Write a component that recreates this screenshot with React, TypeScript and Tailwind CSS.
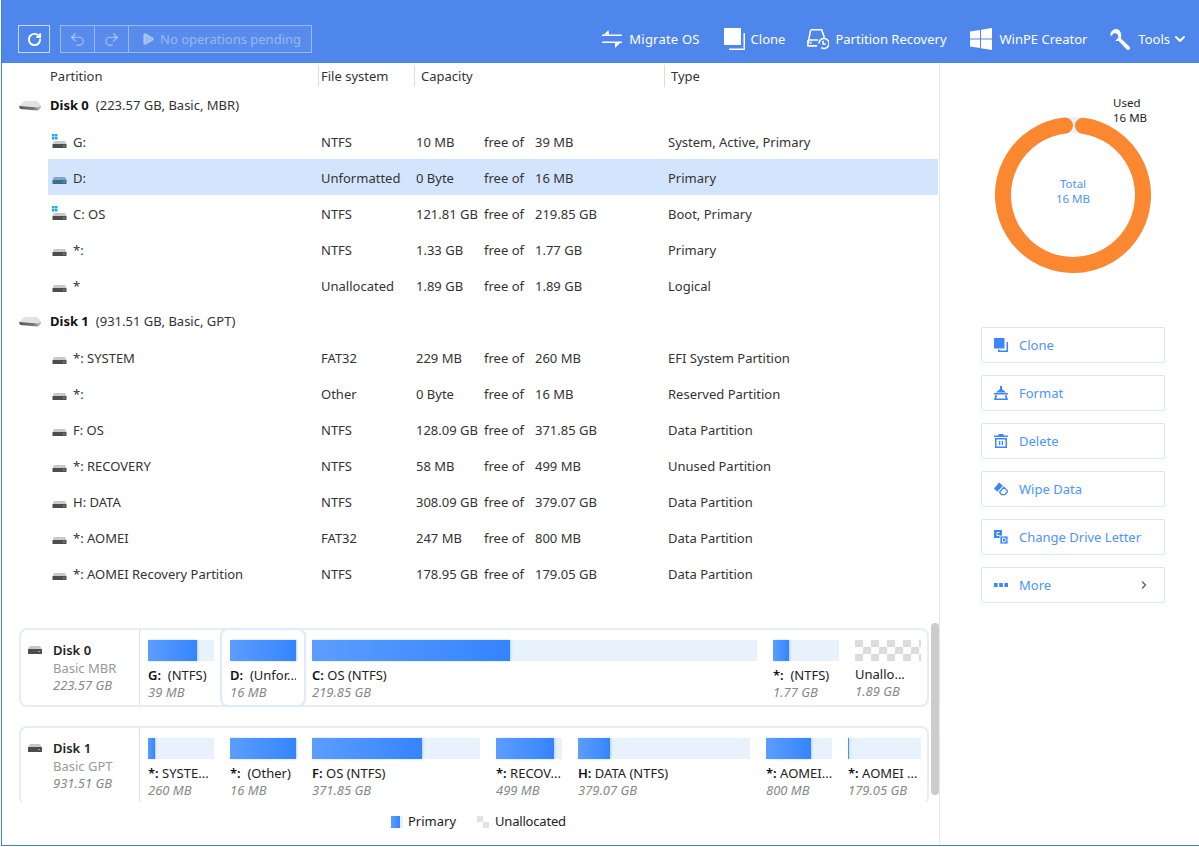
import React from 'react';
import { ChevronDown, ChevronRight, RotateCw, Undo2, Redo2, Play } from 'lucide-react';

// small drive icon, optional windows flag on top-left
const DriveIcon = ({ system, selected }: { system?: boolean; selected?: boolean }) => (
  <svg width="15" height="14" viewBox="0 0 15 14" className="shrink-0">
    {system && (
      <g fill="#19a9e8">
        <rect x="0" y="0" width="2.500" height="2.500" />
        <rect x="3" y="0" width="2.500" height="2.500" />
        <rect x="0" y="3" width="2.500" height="2.500" />
        <rect x="3" y="3" width="2.500" height="2.500" />
      </g>
    )}
    <path d="M2 7h11l1.500 3H.5z" fill={selected ? '#7fa9c9' : '#c9c9c9'} />
    <rect x="0.500" y="10" width="14" height="4" rx="0.500" fill={selected ? '#3f6d8e' : '#4d4d4d'} />
    <rect x="11" y="11.500" width="2" height="1" fill="#3ddc5a" />
  </svg>
);

const DiskIcon = () => (
  <svg width="22" height="11" viewBox="0 0 22 11" className="shrink-0">
    <defs>
      <linearGradient id="diskband" x1="0" y1="0" x2="1" y2="0">
        <stop offset="0" stopColor="#555" />
        <stop offset="0.7" stopColor="#777" />
        <stop offset="1" stopColor="#c4c4c4" />
      </linearGradient>
    </defs>
    <path d="M5 0h13l4 4.500-3 2L0 5z" fill="#e2e2e2" />
    <path d="M0 5l19 1.500 3-2v2L19 9.500 1 8z" fill="url(#diskband)" />
  </svg>
);

const MapDriveIcon = () => (
  <svg width="14" height="8" viewBox="0 0 14 8" className="shrink-0">
    <path d="M2 0h10l2 3H0z" fill="#c8c8c8" />
    <rect x="0" y="3" width="14" height="5" rx="0.500" fill="#4d4d4d" />
    <rect x="10" y="5" width="2" height="1" fill="#3ddc5a" />
  </svg>
);

const NavMigrate = () => (
  <svg width="20" height="20" viewBox="0 0 20 20" fill="#fff">
    <path d="M0 5.500h20v1.600H0zM0 12.500h20v1.600H0z" />
    <path d="M6.500 1L2 5.500h5zM13 14h5l-5 5z" />
  </svg>
);

const NavClone = () => (
  <svg width="22" height="22" viewBox="0 0 22 22" fill="#fff">
    <rect x="0" y="0" width="17" height="17" />
    <path d="M19.500 5H21v17H5v-1.500h14.500z" />
  </svg>
);

const NavRecovery = () => (
  <svg width="22" height="22" viewBox="0 0 24 22" fill="none" stroke="#fff" strokeWidth="1.700">
    <path d="M4 1h12l3 8.500M1 16.500L4 1M1 12h11M1 12v6.500h10" />
    <rect x="3" y="14" width="2" height="2" fill="#fff" stroke="none" />
    <path d="M13 16a5.500 5.500 0 1 1 2.500 4.500M17.500 13v3.500h3" />
  </svg>
);

const NavWindows = () => (
  <svg width="22" height="22" viewBox="0 0 22 22" fill="#fff">
    <path d="M0 3.500l10-1.500v8.500H0zM11 1.800L22 0v10.500H11zM0 11.500h10V20L0 18.500zM11 11.500h11V22l-11-1.800z" />
  </svg>
);

const NavWrench = () => (
  <svg width="21" height="21" viewBox="0 0 21 21" fill="#fff">
    <path d="M6.500 0C3 0 .5 2.500.5 5.500c0 .6.100 1.200.3 1.700L4 4l3.500 1 1 3.500L5.300 11.700c.5.200 1.100.3 1.700.3.500 0 1-.1 1.500-.2l8 8.500c.8.900 2.200.9 3 .1s.8-2.200-.1-3l-8.500-8c.1-.5.2-1 .2-1.500C11.800 4 9.500 0 6.500 0z" />
  </svg>
);

const SideClone = () => (
  <svg width="14" height="14" viewBox="0 0 14 14" fill="#3a86ff">
    <rect width="10.500" height="10.500" />
    <path d="M12 4h2v10H4v-2.500h1.500V12.500h7V4z" />
  </svg>
);
const SideFormat = () => (
  <svg width="14" height="14" viewBox="0 0 14 14" fill="#3a86ff">
    <path d="M6 0h2v3l4 3.500H2L6 3z" />
    <rect x="0" y="7" width="14" height="1.500" />
    <path d="M1.500 9h1.500l-.6 3.500h9.200L11 9h1.500l1.500 5H0z" />
  </svg>
);
const SideDelete = () => (
  <svg width="14" height="14" viewBox="0 0 14 14" fill="#3a86ff">
    <path d="M4.500 0h5v1.500H14V3H0V1.500h4.500z" />
    <path d="M1 4h12v10H1zm1.500 1.500v7h9v-7z" fillRule="evenodd" />
    <rect x="5" y="7" width="1.300" height="4" />
    <rect x="7.700" y="7" width="1.300" height="4" />
  </svg>
);
const SideWipe = () => (
  <svg width="15" height="14" viewBox="0 0 15 14" fill="#3a86ff">
    <path d="M5.500 0L0 6.500 3.500 10l6-6.500z" />
    <path d="M6 10.500l4.500-5.500L15 9.500 11.500 13H8z" fill="none" stroke="#3a86ff" strokeWidth="1.400" />
  </svg>
);
const SideLetter = () => (
  <svg width="14" height="14" viewBox="0 0 14 14">
    <rect width="8" height="8" fill="#3a86ff" />
    <rect x="6" y="6" width="8" height="8" fill="#3a86ff" stroke="#fff" strokeWidth="0.800" />
    <path d="M5.500 2.500H3v3h2.500" fill="none" stroke="#fff" strokeWidth="1" />
    <path d="M8.500 8v4h1.500a2 2 0 0 0 0-4z" fill="none" stroke="#fff" strokeWidth="1" />
  </svg>
);
const SideMore = () => (
  <svg width="14" height="14" viewBox="0 0 14 14" fill="#3a86ff">
    <rect y="5" width="3.600" height="4" />
    <rect x="5.200" y="5" width="3.600" height="4" />
    <rect x="10.400" y="5" width="3.600" height="4" />
  </svg>
);

type Part = { name: string; sys?: boolean; selected?: boolean; fs: string; free: string; total: string; type: string };

const disk0: Part[] = [
  { name: 'G:', sys: true, fs: 'NTFS', free: '10 MB', total: '39 MB', type: 'System, Active, Primary' },
  { name: 'D:', selected: true, fs: 'Unformatted', free: '0 Byte', total: '16 MB', type: 'Primary' },
  { name: 'C: OS', sys: true, fs: 'NTFS', free: '121.81 GB', total: '219.85 GB', type: 'Boot, Primary' },
  { name: '*:', fs: 'NTFS', free: '1.33 GB', total: '1.77 GB', type: 'Primary' },
  { name: '*', fs: 'Unallocated', free: '1.89 GB', total: '1.89 GB', type: 'Logical' },
];

const disk1: Part[] = [
  { name: '*: SYSTEM', fs: 'FAT32', free: '229 MB', total: '260 MB', type: 'EFI System Partition' },
  { name: '*:', fs: 'Other', free: '0 Byte', total: '16 MB', type: 'Reserved Partition' },
  { name: 'F: OS', fs: 'NTFS', free: '128.09 GB', total: '371.85 GB', type: 'Data Partition' },
  { name: '*: RECOVERY', fs: 'NTFS', free: '58 MB', total: '499 MB', type: 'Unused Partition' },
  { name: 'H: DATA', fs: 'NTFS', free: '308.09 GB', total: '379.07 GB', type: 'Data Partition' },
  { name: '*: AOMEI', fs: 'FAT32', free: '247 MB', total: '800 MB', type: 'Data Partition' },
  { name: '*: AOMEI Recovery Partition', fs: 'NTFS', free: '178.95 GB', total: '179.05 GB', type: 'Data Partition' },
];

const PartRow = ({ p }: { p: Part }) => (
  <div className={`ml-[46px] mr-px h-9 pt-[4px] grid grid-cols-[273px_95px_68px_51px_133px_1fr] items-center ${p.selected ? 'bg-[#d3e5fc]' : ''}`}>
    <div className="flex items-center gap-[6px] pl-[4px]">
      <span className="-mt-[5px] flex">
        <DriveIcon system={p.sys} selected={p.selected} />
      </span>
      <span>{p.name}</span>
    </div>
    <span>{p.fs}</span>
    <span>{p.free}</span>
    <span>free of</span>
    <span>{p.total}</span>
    <span>{p.type}</span>
  </div>
);

const DiskRow = ({ name, info }: { name: string; info: string }) => (
  <div className="h-9 pt-[2px] flex items-center pl-[17px] gap-[9px]">
    <DiskIcon />
    <span>
      <b className="font-bold text-[#111]">{name}</b>
      <span className="ml-[7px]">{info}</span>
    </span>
  </div>
);

type Seg = { label: string; head: string; size: string; w: number; fill?: number; unalloc?: boolean; active?: boolean };

const map0: Seg[] = [
  { head: 'G:', label: ' (NTFS)', size: '39 MB', w: 82, fill: 49 },
  { head: 'D:', label: ' (Unfor...', size: '16 MB', w: 82, fill: 66, active: true },
  { head: 'C:', label: 'OS (NTFS)', size: '219.85 GB', w: 461, fill: 198 },
  { head: '*:', label: ' (NTFS)', size: '1.77 GB', w: 82, fill: 16 },
  { head: '', label: 'Unallo...', size: '1.89 GB', w: 82, unalloc: true },
];

const map1: Seg[] = [
  { head: '*:', label: 'SYSTE...', size: '260 MB', w: 82, fill: 7 },
  { head: '*:', label: ' (Other)', size: '16 MB', w: 82, fill: 66 },
  { head: 'F:', label: 'OS (NTFS)', size: '371.85 GB', w: 184, fill: 110 },
  { head: '*:', label: 'RECOV...', size: '499 MB', w: 82, fill: 58 },
  { head: 'H:', label: 'DATA (NTFS)', size: '379.07 GB', w: 188, fill: 32 },
  { head: '*:', label: 'AOMEI...', size: '800 MB', w: 82, fill: 45 },
  { head: '*:', label: 'AOMEI ...', size: '179.05 GB', w: 89, fill: 1 },
];

const SegCell = ({ s }: { s: Seg }) => (
  <div
    className={`shrink-0 px-2 pt-[10px] rounded-md ${s.active ? 'relative outline-2 outline-[#dfeafb] shadow-[0_0_4px_#dbe8fb] bg-white' : ''}`}
    style={{ width: s.w }}
  >
    {s.unalloc ? (
      <div className="h-[21px] bg-[conic-gradient(#fff_25%,#dcdcdc_0_50%,#fff_0_75%,#dcdcdc_0)] bg-[length:16px_14px]" />
    ) : (
      <div className="h-[21px] bg-[#e8f2fd]">
        <div
          className="h-full bg-gradient-to-r from-[#5c9dff] to-[#3484ff] shadow-[1px_0_2px_#b9d4fb]"
          style={{ width: s.fill }}
        />
      </div>
    )}
    <div className={`${s.unalloc ? 'mt-[4px]' : 'mt-[5px]'} h-[18px] leading-[18px] text-[#222] whitespace-pre overflow-hidden`}>
      {s.head && <span className="font-semibold text-[#111]">{s.head} </span>}
      {s.label}
    </div>
    <div className="h-[17px] leading-[17px] italic text-[#888] whitespace-nowrap">{s.size}</div>
  </div>
);

const MapCard = ({ name, kind, size, segs }: { name: string; kind: string; size: string; segs: Seg[] }) => (
  <div className="w-[910px] h-[79px] flex border-2 border-[#e8edf2] rounded-lg bg-white shrink-0">
    <div className="w-[119px] shrink-0 border-r border-[#dfe3e8] flex gap-[11px] pl-[7px] pt-[11px]">
      <div className="pt-[5px]">
        <MapDriveIcon />
      </div>
      <div>
        <div className="h-[18px] leading-[18px] font-semibold text-[#222]">{name}</div>
        <div className="h-[18px] leading-[18px] text-[#999]">{kind}</div>
        <div className="h-[17px] leading-[17px] italic text-[#888]">{size}</div>
      </div>
    </div>
    {segs.map((s, i) => (
      <SegCell key={i} s={s} />
    ))}
  </div>
);

const ActionBtn = ({ icon, label, more }: { icon: React.ReactNode; label: string; more?: boolean }) => (
  <div className="w-[184px] h-9 flex items-center border border-[#dbe7fa] rounded-[2px] pl-[12px] pr-[14px] text-[#4d94ff]">
    <span className="w-[14px] flex justify-center">{icon}</span>
    <span className="ml-[11px] pt-[1px]">{label}</span>
    {more && <ChevronRight size={12} strokeWidth={3} className="ml-auto text-[#666]" />}
  </div>
);

const App = () => {
  return (
    <div className="w-[1198px] h-[846px] overflow-hidden bg-white border-l border-b border-[#3d85c6] flex flex-col font-['Noto_Sans','Open_Sans',sans-serif] text-[13px] text-[#333] box-border ml-px">
      {/* top bar */}
      <header className="h-[63px] shrink-0 bg-[#4e86ec] flex items-start pt-[25px] pl-[16px] text-white">
        <button className="w-[32px] h-[28px] border border-white/70 flex items-center justify-center">
          <RotateCw size={15} strokeWidth={3} />
        </button>
        <div className="ml-[10px] h-[28px] flex border border-white/40 bg-white/5 text-white/40">
          <div className="w-[34px] flex items-center justify-center border-r border-white/40">
            <Undo2 size={17} strokeWidth={2} />
          </div>
          <div className="w-[34px] flex items-center justify-center border-r border-white/40">
            <Redo2 size={17} strokeWidth={2} />
          </div>
          <div className="w-[182px] flex items-center pl-[12px] gap-[5px]">
            <Play size={14} fill="currentColor" />
            <span className="pt-[1px]">No operations pending</span>
          </div>
        </div>
        <div className="ml-auto h-[28px] flex items-center pr-[11px]">
          <div className="flex items-center gap-[7px]">
            <NavMigrate />
            <span className="pt-[2px] tracking-[0.2px]">Migrate OS</span>
          </div>
          <div className="flex items-center gap-[5px] ml-[24px]">
            <NavClone />
            <span className="pt-[2px]">Clone</span>
          </div>
          <div className="flex items-center gap-[6px] ml-[22px]">
            <NavRecovery />
            <span className="pt-[2px]">Partition Recovery</span>
          </div>
          <div className="flex items-center gap-[8px] ml-[23px]">
            <NavWindows />
            <span className="pt-[2px]">WinPE Creator</span>
          </div>
          <div className="flex items-center gap-[7px] ml-[23px]">
            <NavWrench />
            <span className="pt-[2px]">Tools</span>
            <ChevronDown size={16} strokeWidth={3} className="-ml-[5px]" />
          </div>
        </div>
      </header>

      <div className="flex-1 flex min-h-0">
        {/* left side */}
        <main className="w-[938px] shrink-0 flex flex-col border-r border-[#e8e8e8] relative">
          <div className="h-[24px] pt-[2px] shrink-0 ml-[46px] grid grid-cols-[270px_96px_250px_1fr] items-start leading-[22px]">
            <span className="pl-[2px]">Partition</span>
            <span className="border-l border-[#ddd] h-[22px] pl-[2px]">File system</span>
            <span className="border-l border-[#ddd] h-[22px] pl-[6px]">Capacity</span>
            <span className="border-l border-[#ddd] h-[22px] pl-[6px]">Type</span>
          </div>
          <DiskRow name="Disk 0" info="(223.57 GB, Basic, MBR)" />
          {disk0.map((p, i) => (
            <PartRow key={i} p={p} />
          ))}
          <DiskRow name="Disk 1" info="(931.51 GB, Basic, GPT)" />
          {disk1.map((p, i) => (
            <PartRow key={i} p={p} />
          ))}

          <div className="mt-[37px] h-[174px] overflow-hidden pl-[17px] flex flex-col gap-[19px]">
            <MapCard name="Disk 0" kind="Basic MBR" size="223.57 GB" segs={map0} />
            <MapCard name="Disk 1" kind="Basic GPT" size="931.51 GB" segs={map1} />
          </div>

          <div className="flex-1 flex items-start pl-[389px] gap-[21px] pt-[10px] text-[#222]">
            <div className="flex items-center gap-[5px]">
              <span className="w-[12px] h-[12px] flex">
                <span className="w-[9px] h-full bg-gradient-to-r from-[#5c9dff] to-[#3484ff]" />
                <span className="w-[3px] h-full bg-[#e8f2fd]" />
              </span>
              <span>Primary</span>
            </div>
            <div className="flex items-center gap-[6px]">
              <span className="w-[12px] h-[12px] bg-[conic-gradient(#fff_25%,#e2e2e2_0_50%,#fff_0_75%,#e2e2e2_0)] bg-[length:12px_12px]" />
              <span className="tracking-[-0.2px]">Unallocated</span>
            </div>
          </div>

          {/* scrollbar */}
          <div className="absolute right-0 top-[560px] w-2 h-[172px] bg-[#cccccc] rounded" />
        </main>

        {/* right side */}
        <aside className="flex-1 relative">
          <div className="absolute left-[173px] top-[32px] leading-[15px] text-[11.500px] text-[#222]">
            Used
            <br />
            16 MB
          </div>
          <div className="pt-[54px] pl-[55px]">
            <div className="relative w-[156px] h-[156px]">
              <svg width="156" height="156" viewBox="0 0 156 156">
                <circle cx="78" cy="78" r="70" fill="none" stroke="#e8f2fd" strokeWidth="16" />
                <path
                  d="M88 8.720 A70 70 0 1 1 70 8.460"
                  fill="none"
                  stroke="#fb8830"
                  strokeWidth="16"
                  strokeLinecap="round"
                />
              </svg>
              <div className="absolute inset-0 pb-[9px] flex flex-col items-center justify-center text-[11.500px] leading-[15px] text-[#4d94ff]">
                <span>Total</span>
                <span>16 MB</span>
              </div>
            </div>
          </div>
          <div className="mt-[54px] ml-[41px] flex flex-col gap-3">
            <ActionBtn icon={<SideClone />} label="Clone" />
            <ActionBtn icon={<SideFormat />} label="Format" />
            <ActionBtn icon={<SideDelete />} label="Delete" />
            <ActionBtn icon={<SideWipe />} label="Wipe Data" />
            <ActionBtn icon={<SideLetter />} label="Change Drive Letter" />
            <ActionBtn icon={<SideMore />} label="More" more />
          </div>
        </aside>
      </div>
    </div>
  );
};

export default App;
